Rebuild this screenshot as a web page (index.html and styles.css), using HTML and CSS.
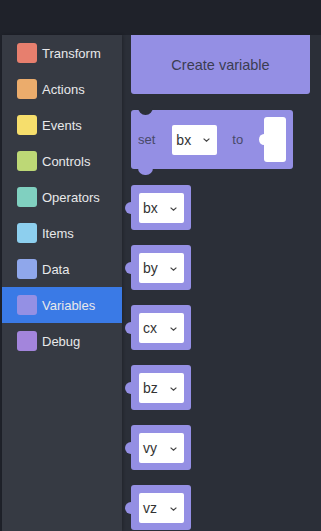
FILE: index.html
```html
<!DOCTYPE html>
<html lang="en">
<head>
  <meta charset="UTF-8" />
  <meta name="viewport" content="width=device-width, initial-scale=1.0" />
  <title>Blocks</title>
  <link rel="stylesheet" href="styles.css">
</head>
<body>
  <header class="topbar"></header>

  <main class="editor">
    <div class="edge"></div>

    <nav class="toolbox">
      <div class="cat"><span class="swatch transform"></span>Transform</div>
      <div class="cat"><span class="swatch actions"></span>Actions</div>
      <div class="cat"><span class="swatch events"></span>Events</div>
      <div class="cat"><span class="swatch controls"></span>Controls</div>
      <div class="cat"><span class="swatch operators"></span>Operators</div>
      <div class="cat"><span class="swatch items"></span>Items</div>
      <div class="cat"><span class="swatch data"></span>Data</div>
      <div class="cat active"><span class="swatch variables"></span>Variables</div>
      <div class="cat"><span class="swatch debug"></span>Debug</div>
    </nav>

    <section class="workspace">
      <button class="create-btn">Create variable</button>

      <div class="set-block">
        <span class="notch"></span>
        <span class="label">set</span>
        <div class="dropdown">bx <svg class="caret" width="7" height="4" viewBox="0 0 7 4"><path d="M0.6 0.6L3.5 3.2L6.4 0.6" fill="none" stroke="#444" stroke-width="1.2"/></svg></div>
        <span class="label to">to</span>
        <div class="slot"></div>
        <span class="tab"></span>
      </div>

      <div class="var-block"><div class="dropdown">bx <svg class="caret" width="7" height="4" viewBox="0 0 7 4"><path d="M0.6 0.6L3.5 3.2L6.4 0.6" fill="none" stroke="#444" stroke-width="1.2"/></svg></div></div>
      <div class="var-block"><div class="dropdown">by <svg class="caret" width="7" height="4" viewBox="0 0 7 4"><path d="M0.6 0.6L3.5 3.2L6.4 0.6" fill="none" stroke="#444" stroke-width="1.2"/></svg></div></div>
      <div class="var-block"><div class="dropdown">cx <svg class="caret" width="7" height="4" viewBox="0 0 7 4"><path d="M0.6 0.6L3.5 3.2L6.4 0.6" fill="none" stroke="#444" stroke-width="1.2"/></svg></div></div>
      <div class="var-block"><div class="dropdown">bz <svg class="caret" width="7" height="4" viewBox="0 0 7 4"><path d="M0.6 0.6L3.5 3.2L6.4 0.6" fill="none" stroke="#444" stroke-width="1.2"/></svg></div></div>
      <div class="var-block"><div class="dropdown">vy <svg class="caret" width="7" height="4" viewBox="0 0 7 4"><path d="M0.6 0.6L3.5 3.2L6.4 0.6" fill="none" stroke="#444" stroke-width="1.2"/></svg></div></div>
      <div class="var-block"><div class="dropdown">vz <svg class="caret" width="7" height="4" viewBox="0 0 7 4"><path d="M0.6 0.6L3.5 3.2L6.4 0.6" fill="none" stroke="#444" stroke-width="1.2"/></svg></div></div>
    </section>
  </main>
</body>
</html>
```

FILE: styles.css
```css
:root {
  --top: #1f222a;
  --side: #363a43;
  --ws: #2b2f38;
  --block: #948fe4;
  --active: #3a7ae6;
  --ink: #3b3d52;
}
* { margin: 0; padding: 0; box-sizing: border-box; }
html, body { height: 100%; }
body {
  background: var(--ws);
  font-family: 'Liberation Sans', Arial, sans-serif;
  display: flex;
  flex-direction: column;
  overflow: hidden;
}
.topbar {
  height: 35px;
  flex: none;
  background: var(--top);
}
.editor {
  flex: 1;
  display: flex;
  min-height: 0;
}
.edge {
  width: 2px;
  background: var(--top);
  flex: none;
}
.toolbox {
  width: 120px;
  flex: none;
  background: var(--side);
  box-shadow: 1px 0 3px rgba(0, 0, 0, 0.25);
  z-index: 1;
}
.cat {
  height: 36px;
  display: flex;
  align-items: center;
  padding-left: 15px;
  gap: 5px;
  color: #e8e8ea;
  font-size: 13px;
}
.cat.active { background: var(--active); }
.swatch {
  width: 20px;
  height: 20px;
  border-radius: 3px;
}
.transform { background: #e77f6e; }
.actions { background: #ebac6c; }
.events { background: #f6de6c; }
.controls { background: #bdd876; }
.operators { background: #80d0c0; }
.items { background: #8dcfee; }
.data { background: #8fa7eb; }
.variables { background: #9490e4; }
.debug { background: #a385dc; }

.workspace {
  flex: 1;
  display: flex;
  flex-direction: column;
  align-items: flex-start;
  padding-left: 9px;
  gap: 15px;
}
.create-btn {
  width: 179px;
  height: 59px;
  border: none;
  border-radius: 0 0 3px 3px;
  background: var(--block);
  color: var(--ink);
  font-family: inherit;
  font-size: 14.5px;
  margin-bottom: 1px;
}
.set-block {
  position: relative;
  width: 162px;
  height: 59px;
  background: var(--block);
  border-radius: 3px;
  display: flex;
  align-items: center;
  padding-left: 7px;
  margin-bottom: 1px;
}
.notch {
  position: absolute;
  left: 7px;
  top: -3px;
  width: 15px;
  height: 8px;
  border-radius: 0 0 8px 8px;
  background: var(--ws);
}
.tab {
  position: absolute;
  left: 7px;
  bottom: -6px;
  width: 15px;
  height: 7px;
  border-radius: 0 0 8px 8px;
  background: var(--block);
}
.label {
  color: var(--ink);
  font-size: 13px;
  opacity: 0.85;
}
.label.to { margin-left: 15px; }
.set-block .dropdown { margin-left: 17px; }
.slot {
  position: relative;
  width: 22px;
  height: 45px;
  background: #fff;
  border-radius: 3px;
  margin-left: 21px;
}
.slot::before {
  content: '';
  position: absolute;
  left: -5px;
  top: 17px;
  width: 10px;
  height: 11px;
  border-radius: 50%;
  background: #fff;
}
.dropdown {
  width: 45px;
  height: 30px;
  background: #fff;
  border-radius: 2px;
  display: flex;
  align-items: center;
  justify-content: space-between;
  padding: 0 7px 0 4px;
  color: #333;
  font-size: 14px;
}
.caret { margin-top: 1px; }
.var-block {
  position: relative;
  width: 60px;
  height: 45px;
  background: var(--block);
  border-radius: 3px;
  padding: 8px 7px 0 8px;
}
.var-block::before {
  content: '';
  position: absolute;
  left: -6px;
  top: 17px;
  width: 12px;
  height: 12px;
  border-radius: 50%;
  background: var(--block);
}
```
